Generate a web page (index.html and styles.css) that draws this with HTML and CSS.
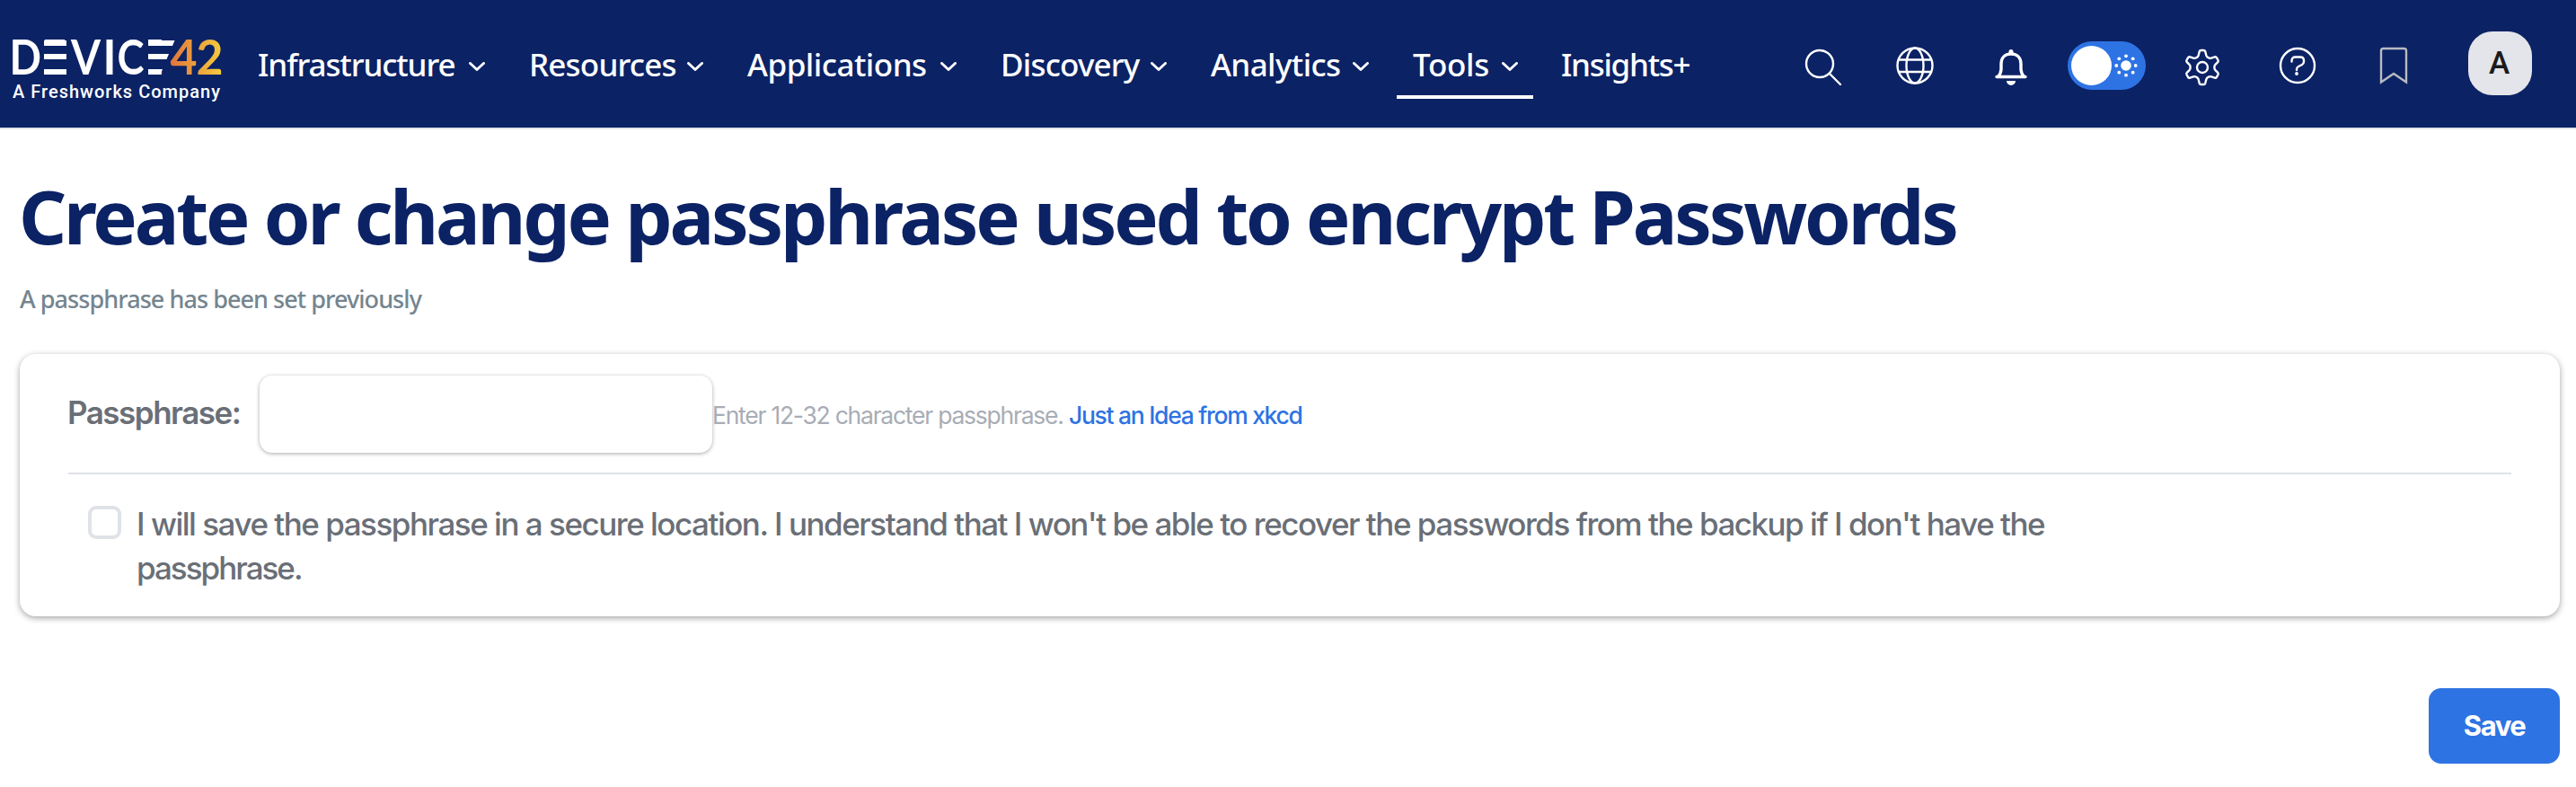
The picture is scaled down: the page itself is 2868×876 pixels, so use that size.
FILE: index.html
```html
<!DOCTYPE html>
<html lang="en">
<head>
<meta charset="utf-8">
<title>Device42 - Passphrase</title>
<link rel="stylesheet" href="styles.css">
</head>
<body>
<header class="topbar">
  <a class="logo" aria-label="Device42, a Freshworks company">
    <svg width="240" height="80" viewBox="10 40 240 80">
      <defs>
        <linearGradient id="sun" gradientUnits="userSpaceOnUse" x1="190" y1="0" x2="246" y2="0">
          <stop offset="0" stop-color="#e2753a"/><stop offset="1" stop-color="#f5c93f"/>
        </linearGradient>
      </defs>
      <g class="logo-word">
        <text x="10.500" y="83" textLength="35.500" lengthAdjust="spacingAndGlyphs">D</text>
        <text x="46" y="83" textLength="28" lengthAdjust="spacingAndGlyphs">E</text>
        <text x="79" y="83" textLength="33" lengthAdjust="spacingAndGlyphs">V</text>
        <text x="114.500" y="83" textLength="15" lengthAdjust="spacingAndGlyphs">I</text>
        <text x="130.500" y="83" textLength="30" lengthAdjust="spacingAndGlyphs">C</text>
        <text x="162" y="83" textLength="19" lengthAdjust="spacingAndGlyphs">E</text>
      </g>
      <path class="logo-gap" d="M45 43h4v42h-4zM161 43h4v42h-4zM48 51h26v9h-26zM48 66h26v11h-26zM164 51h24v9h-24zM164 66h20v11h-20z"/>
      <path class="logo-bars" d="M49 45h25v6h-25zM49 60h25v6h-25zM49 77h25v6h-25zM165 45h29.500l-2.500 6H165zM165 60h23l-2.500 6H165zM165 77h16l-2.500 6H165z"/>
      <g class="logo-word logo-num">
        <text x="189.500" y="83" textLength="30" lengthAdjust="spacingAndGlyphs">4</text>
        <text x="218.500" y="83" textLength="30" lengthAdjust="spacingAndGlyphs">2</text>
      </g>
      <text class="logo-tag" x="14" y="109" textLength="231" lengthAdjust="spacing">A Freshworks Company</text>
    </svg>
  </a>
  <nav class="menu">
    <a class="item w1"><span>Infrastructure</span><svg class="chev" viewBox="0 0 18 10"><path d="M1.500 1.500 9 8.500l7.500-7"/></svg></a>
    <a class="item w2"><span>Resources</span><svg class="chev" viewBox="0 0 18 10"><path d="M1.500 1.500 9 8.500l7.500-7"/></svg></a>
    <a class="item w3"><span>Applications</span><svg class="chev" viewBox="0 0 18 10"><path d="M1.500 1.500 9 8.500l7.500-7"/></svg></a>
    <a class="item w4"><span>Discovery</span><svg class="chev" viewBox="0 0 18 10"><path d="M1.500 1.500 9 8.500l7.500-7"/></svg></a>
    <a class="item w5"><span>Analytics</span><svg class="chev" viewBox="0 0 18 10"><path d="M1.500 1.500 9 8.500l7.500-7"/></svg></a>
    <a class="item w6 active"><span>Tools</span><svg class="chev" viewBox="0 0 18 10"><path d="M1.500 1.500 9 8.500l7.500-7"/></svg></a>
    <a class="item w7"><span>Insights+</span></a>
  </nav>
  <div class="tools">
    <svg class="ic search" viewBox="0 0 42 42"><circle cx="17" cy="17" r="15"/><path d="m28 28 12 12"/></svg>
    <svg class="ic globe" viewBox="0 0 42 42"><circle cx="21" cy="21" r="19.500"/><ellipse cx="21" cy="21" rx="9.500" ry="19.500"/><path d="M3 14.500h36M3 28h36"/></svg>
    <svg class="ic bell" viewBox="0 0 42 42"><path d="M21 6c-7 0-11 4.500-11 11v6c0 3.500-1.500 6-3.500 8.500H5h32h-1.500C33.500 29 32 26.500 32 23v-6C32 10.500 28 6 21 6z"/><path class="fill" d="M18.500 5V3.500a2.500 2.500 0 0 1 5 0V5zM16 36h10a5 5 0 0 1-10 0z"/></svg>
    <span class="toggle"><i class="knob"></i>
      <svg class="sun" viewBox="0 0 26 26"><circle cx="13" cy="13" r="5.800"/><circle cx="13" cy="2.300" r="1.900"/><circle cx="13" cy="23.700" r="1.900"/><circle cx="2.300" cy="13" r="1.900"/><circle cx="23.700" cy="13" r="1.900"/><circle cx="5.300" cy="5.300" r="1.900"/><circle cx="20.700" cy="5.300" r="1.900"/><circle cx="5.300" cy="20.700" r="1.900"/><circle cx="20.700" cy="20.700" r="1.900"/></svg>
    </span>
    <svg class="ic gear" viewBox="0 0 42 42"><path d="M17.800 3.200Q18.200 2 19.500 2h3Q23.800 2 24.200 3.200L25.400 7.800Q26 9.600 27.900 10.300Q29.300 11.200 31 10.600L34.800 9.300Q36.200 9 36.900 10.200L38.500 13Q39.100 14.200 38.200 15.200L35.200 18.200Q34.300 19.200 34.400 21Q34.300 22.800 35.200 23.800L38.200 26.800Q39.100 27.800 38.500 29L36.900 31.800Q36.200 33 34.800 32.700L31 31.400Q29.300 30.800 27.900 31.700Q26 32.400 25.400 34.200L24.200 38.800Q23.800 40 22.500 40h-3Q18.200 40 17.800 38.800L16.600 34.200Q16 32.400 14.100 31.700Q12.700 30.800 11 31.400L7.200 32.700Q5.800 33 5.100 31.800L3.500 29Q2.900 27.800 3.800 26.800L6.800 23.800Q7.700 22.800 7.600 21Q7.700 19.200 6.800 18.200L3.800 15.200Q2.900 14.200 3.500 13L5.100 10.200Q5.800 9 7.200 9.300L11 10.600Q12.700 11.200 14.100 10.300Q16 9.600 16.600 7.800Z"/><circle cx="21" cy="21" r="6"/></svg>
    <svg class="ic help" viewBox="0 0 42 42"><circle cx="21" cy="21" r="19"/><path d="M14.500 16.500v-1q0-4 4-4h5.500q4 0 4 4v1q0 2.500-2 3.500l-4 2q-2 1-2 3v1"/><circle class="fill" cx="20" cy="30" r="1.900"/></svg>
    <svg class="ic mark" viewBox="0 0 42 42"><path d="M7 39.500V4.500Q7 2 9.500 2h23Q35 2 35 4.500v35L21 30z"/></svg>
    <span class="avatar">A</span>
  </div>
</header>
<main class="page">
  <h1 class="title">Create or change passphrase used to encrypt Passwords</h1>
  <p class="sub">A passphrase has been set previously</p>
  <form class="card">
    <div class="row">
      <label class="label" for="pass">Passphrase:</label>
      <input class="input" id="pass" type="password">
      <span class="help-text">Enter 12-32 character passphrase.</span>
      <a class="link">Just an Idea from xkcd</a>
    </div>
    <div class="confirm">
      <span class="box"></span>
      <span class="confirm-text">I will save the passphrase in a secure location. I understand that I won't be able to recover the passwords from the backup if I don't have the<br><span class="last">passphrase.</span></span>
    </div>
  </form>
  <div class="actions"><button class="save"><span>Save</span></button></div>
</main>
</body>
</html>
```
FILE: styles.css
```css
* { box-sizing: border-box; }
body { margin: 0; background: #fff; font-family: Inter, sans-serif; }

.topbar { display: flex; height: 144px; background: #0b2265; border-bottom: 2px solid #e3e5ea; padding-left: 10px; }
.logo { width: 240px; padding-top: 40px; }
.logo svg { display: block; overflow: visible; }
.logo-word { font: 700 54px Lato, sans-serif; fill: #fff; }
.logo-num { fill: url(#sun); }
.logo-tag { font: 500 20px Roboto, sans-serif; fill: #fff; }
.logo-gap { fill: #0b2265; }
.logo-bars { fill: #fff; }

.menu { display: flex; margin-left: 20px; height: 110px; font: 500 35px/48px "Noto Sans", sans-serif; color: #fff; }
.item { display: flex; justify-content: space-between; padding: 48px 17px 0 18px; height: 110px; white-space: nowrap; letter-spacing: -0.6px; }
.item span { width: 0; }
.w1 { width: 287px; margin-right: 14px; padding-left: 17px; letter-spacing: -1.1px; }
.w2 { width: 229px; margin-right: 14px; letter-spacing: -0.8px; }
.w3 { width: 268px; margin-right: 14px; letter-spacing: -0.5px; }
.w4 { width: 220px; margin-right: 14px; letter-spacing: -0.8px; }
.w5 { width: 211px; margin-right: 14px; }
.w6 { width: 152px; margin-right: 14px; letter-spacing: -0.3px; }
.w7 { padding-left: 17px; letter-spacing: -1.3px; }
.active { border-bottom: 4px solid #fff; }
.chev { width: 18px; height: 10px; margin-top: 21px; fill: none; stroke: #fff; stroke-width: 2.9; stroke-linecap: round; stroke-linejoin: round; }

.tools { display: flex; margin-left: auto; padding-right: 49px; }
.ic { width: 42px; height: 42px; fill: none; stroke: #fff; stroke-width: 2.4; stroke-linecap: round; stroke-linejoin: round; }
.ic .fill { fill: #fff; stroke: none; }
.search { margin: 54px 60px 0 0; }
.globe { margin: 52px 65px 0 0; }
.bell { margin: 54px 42px 0 0; stroke-width: 3.4; }
.toggle { display: flex; align-items: center; gap: 3px; width: 87px; height: 54px; margin: 46px 42px 0 0; padding-left: 4px; border-radius: 27px; background: #2e73e3; }
.knob { width: 45px; height: 44px; border-radius: 50%; background: #fff; }
.sun { width: 26px; height: 26px; fill: #fff; }
.gear { margin: 54px 64px 0 0; }
.help { margin: 52px 65px 0 0; }
.mark { margin: 52px 62px 0 0; stroke: #b9bbc0; stroke-linejoin: miter; }
.avatar { width: 71px; height: 71px; margin-top: 35px; border-radius: 27px; background: #e4e5ea; color: #1b1b1b; font: 500 35px/71px Roboto, sans-serif; text-align: center; text-indent: -2px; }

.page { padding: 0 18px 0 22px; }
.title { margin: 48px 0 0; height: 96px; font: 700 83px/96px "Noto Sans", sans-serif; letter-spacing: -3.2px; text-indent: -1px; color: #0b2265; white-space: nowrap; }
.sub { margin: 25px 0 0; height: 40px; font: 500 27px/40px "Noto Sans", sans-serif; letter-spacing: -0.95px; color: #75858f; }
.card { height: 292px; margin: 41px 0 0; padding: 24px 54px 0; border-radius: 18px; background: #fff; box-shadow: 0 2px 7px rgba(0, 0, 0, .36); }
.row { display: flex; height: 110px; border-bottom: 2px solid #dfe3e8; white-space: nowrap; }
.label { width: 213px; font: 600 35px/82px Inter, sans-serif; letter-spacing: -1.5px; text-indent: -1px; color: #6a6f77; }
.input { width: 504px; height: 86px; padding: 0 20px; border: 0; border-radius: 14px; background: #fff; box-shadow: 0 1px 4px rgba(0, 0, 0, .34); font: 400 34px Inter, sans-serif; }
.help-text { width: 397px; font-size: 26.5px; line-height: 89px; letter-spacing: -1.25px; color: #a8adb5; }
.link { font-size: 26.5px; font-weight: 500; line-height: 89px; letter-spacing: -1.3px; color: #2e73e3; }
.confirm { display: flex; gap: 17px; padding-left: 22px; }
.box { width: 37px; height: 37px; margin-top: 35px; border: 4px solid #dfe3e8; border-radius: 9px; }
.confirm-text { padding-top: 31px; font-size: 35px; font-weight: 500; line-height: 49px; letter-spacing: -1.49px; color: #6a6f77; white-space: nowrap; }
.last { letter-spacing: -2px; }
.actions { display: flex; justify-content: flex-end; margin-top: 80px; }
.save { width: 146px; height: 84px; padding: 0; border: 0; border-radius: 14px; background: #2e73e3; color: #fff; font: 700 31px/84px Inter, sans-serif; letter-spacing: -1.5px; }
```
